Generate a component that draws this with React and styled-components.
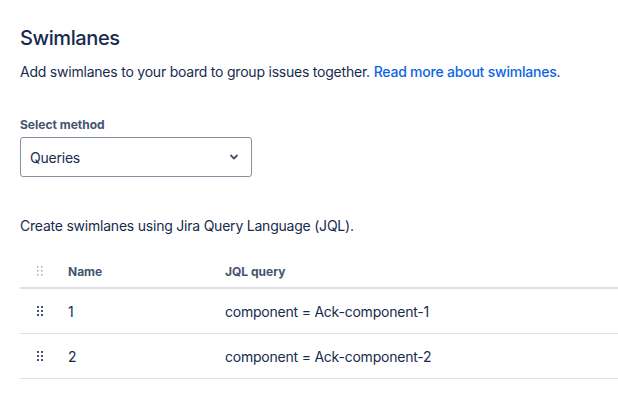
import React from 'react';
import styled, { createGlobalStyle } from 'styled-components';

const GlobalStyle = createGlobalStyle`
  html, body {
    margin: 0;
    padding: 0;
    background: #ffffff;
  }
  body {
    font-family: Inter, "Noto Sans", sans-serif;
    color: #172b4d;
    -webkit-font-smoothing: antialiased;
  }
`;

const Page = styled.div`
  padding: 24px 0 0 20px;
`;

const Title = styled.h2`
  margin: 0;
  font-size: 20px;
  line-height: 28px;
  font-weight: 500;
  color: #172b4d;
  letter-spacing: -0.4px;
`;

const Description = styled.p`
  margin: 10px 0 0;
  font-size: 14px;
  line-height: 20px;
  color: #172b4d;
  letter-spacing: -0.22px;
`;

const Link = styled.a`
  color: #0c66e4;
  text-decoration: none;
  font-weight: 500;
`;

const Field = styled.div`
  margin-top: 35px;
  display: flex;
  flex-direction: column;
  gap: 4px;
`;

const Label = styled.label`
  font-size: 12px;
  line-height: 16px;
  font-weight: 700;
  color: #44546f;
`;

const SelectBox = styled.div`
  box-sizing: border-box;
  width: 232px;
  height: 40px;
  border: 1px solid #8590a2;
  border-radius: 3px;
  display: flex;
  align-items: center;
  justify-content: space-between;
  padding: 0 12px 0 9px;
  font-size: 14px;
  letter-spacing: -0.22px;
  color: #172b4d;
  background: #fff;
`;

const Hint = styled.p`
  margin: 39px 0 0;
  font-size: 14px;
  line-height: 20px;
  color: #172b4d;
  letter-spacing: -0.22px;
`;

const Table = styled.div`
  margin-top: 19px;
  display: flex;
  flex-direction: column;
`;

const Row = styled.div`
  display: grid;
  grid-template-columns: 48px 157px 1fr;
  align-items: center;
  height: ${(p) => (p.$head ? '32px' : '44px')};
  border-bottom: ${(p) => (p.$head ? '2px' : '1px')} solid #dfe1e6;
  font-size: ${(p) => (p.$head ? '12px' : '14px')};
  font-weight: ${(p) => (p.$head ? 700 : 400)};
  letter-spacing: ${(p) => (p.$head ? '0' : '-0.22px')};
  color: ${(p) => (p.$head ? '#44546f' : '#172b4d')};
`;

const HandleCell = styled.div`
  display: flex;
  justify-content: center;
  align-items: center;
  padding-right: 8px;
`;

const Handle = ({ muted }) => (
  <svg width="8" height="10" viewBox="0 0 8 10">
    {[0, 1].map((c) =>
      [0, 1, 2].map((r) => (
        <rect
          key={`${c}-${r}`}
          x={c * 4 + 1}
          y={r * 4}
          width={muted ? 1.5 : 2}
          height={muted ? 1.5 : 2}
          fill={muted ? '#a5adba' : '#44546f'}
        />
      ))
    )}
  </svg>
);

const Chevron = () => (
  <svg width="10" height="10" viewBox="0 0 10 10">
    <path d="M2 3.5 L5 6.5 L8 3.5" fill="none" stroke="#44546f" strokeWidth="1.8" strokeLinecap="round" strokeLinejoin="round" />
  </svg>
);

const rows = [
  { name: '1', query: 'component = Ack-component-1' },
  { name: '2', query: 'component = Ack-component-2' },
];

export default function App() {
  return (
    <Page>
      <GlobalStyle />
      <Title>Swimlanes</Title>
      <Description>
        Add swimlanes to your board to group issues together.{' '}
        <Link href="#">Read more about swimlanes</Link>.
      </Description>

      <Field>
        <Label>Select method</Label>
        <SelectBox>
          <span>Queries</span>
          <Chevron />
        </SelectBox>
      </Field>

      <Hint>Create swimlanes using Jira Query Language (JQL).</Hint>

      <Table>
        <Row $head>
          <HandleCell>
            <Handle muted />
          </HandleCell>
          <div>Name</div>
          <div>JQL query</div>
        </Row>
        {rows.map((row) => (
          <Row key={row.name}>
            <HandleCell>
              <Handle />
            </HandleCell>
            <div>{row.name}</div>
            <div>{row.query}</div>
          </Row>
        ))}
      </Table>
    </Page>
  );
}
